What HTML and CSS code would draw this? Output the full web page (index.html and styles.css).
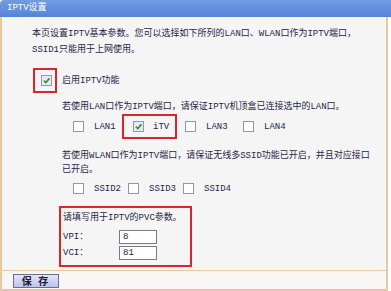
FILE: index.html
```html
<!DOCTYPE html>
<html lang="zh-CN">
<head>
    <meta charset="UTF-8">
    <title>IPTV设置</title>
    <link rel="stylesheet" href="styles.css">
</head>
<body>
<div class="title">IPTV设置</div>
<div class="main">
    <!--说明-->
    <p class="intro">本页设置IPTV基本参数。您可以选择如下所列的LAN口、WLAN口作为IPTV端口，<br>SSID1只能用于上网使用。</p>
    <!--启用-->
    <div class="enable">
        <span class="mark"><span class="cb on"><svg viewBox="0 0 9 9"><path d="M1.8 4.6 L3.9 6.6 L7.4 2.4"/></svg></span></span>
        <span>启用IPTV功能</span>
    </div>
    <div class="section">
        <p class="tip">若使用LAN口作为IPTV端口，请保证IPTV机顶盒已连接选中的LAN口。</p>
        <div class="ports lan">
            <div class="port"><span class="cb"></span><span>LAN1</span></div>
            <div class="port pick"><span class="cb on"><svg viewBox="0 0 9 9"><path d="M1.8 4.6 L3.9 6.6 L7.4 2.4"/></svg></span><span>iTV</span></div>
            <div class="port"><span class="cb"></span><span>LAN3</span></div>
            <div class="port"><span class="cb"></span><span>LAN4</span></div>
        </div>
        <p class="tip wlan">若使用WLAN口作为IPTV端口，请保证无线多SSID功能已开启，并且对应接口<br>已开启。</p>
        <div class="ports ssid">
            <div class="port"><span class="cb"></span><span>SSID2</span></div>
            <div class="port"><span class="cb"></span><span>SSID3</span></div>
            <div class="port"><span class="cb"></span><span>SSID4</span></div>
        </div>
        <!--PVC参数-->
        <div class="pvc">
            <p>请填写用于IPTV的PVC参数。</p>
            <div class="field first"><label>VPI：</label><input type="text" value="8"></div>
            <div class="field"><label>VCI：</label><input type="text" value="81"></div>
        </div>
    </div>
</div>
<div class="footer">
    <button type="button">保&nbsp;存</button>
</div>
</body>
</html>
```

FILE: styles.css
```css
* {
    margin: 0;
    padding: 0;
    box-sizing: border-box;
}

body {
    width: 391px;
    height: 291px;
    overflow: hidden;
    background: #fff;
    font: 9px/14px "Liberation Mono", "Noto Sans CJK SC", monospace;
    color: #1f2748;
}

.title {
    height: 17px;
    padding-left: 7px;
    line-height: 17px;
    color: #fff;
    background: linear-gradient(#729be6, #5583d8);
    border-top-left-radius: 4px;
}

.main {
    width: 388px;
    height: 254px;
    padding: 9px 0 0 30px;
    background: #f5f5f5;
    border: 2px solid #e6c9a2;
    border-top: 0;
    border-bottom-width: 1px;
}

.intro {
    line-height: 16px;
}

.enable {
    display: flex;
    align-items: center;
    gap: 5px;
    height: 25px;
    margin: 10px 0 0 1px;
}

.mark {
    display: flex;
    align-items: center;
    justify-content: center;
    width: 24px;
    height: 25px;
    padding-left: 3px;
    border: 2px solid #d8262b;
}

.cb {
    display: inline-block;
    flex: none;
    width: 11px;
    height: 11px;
    border: 1px solid #8e99ae;
    background: #fff;
}

.cb.on {
    background: #e9e9f0;
}

.cb svg {
    display: block;
    width: 9px;
    height: 9px;
}

.cb path {
    fill: none;
    stroke: #2c9a2c;
    stroke-width: 1.7;
}

.section {
    margin-left: 30px;
}

.tip {
    margin-top: 7px;
}

.tip.wlan {
    margin-top: 10px;
}

.ports {
    display: grid;
    align-items: center;
    padding-left: 11px;
}

.ports.lan {
    grid-template-columns: 49px 63px 58px auto;
    height: 25px;
}

.ports.ssid {
    grid-template-columns: 55px 55px auto;
    height: 15px;
    margin-top: 4px;
}

.port {
    display: flex;
    align-items: center;
    gap: 10px;
}

.port.pick {
    width: 55px;
    height: 25px;
    padding-left: 9px;
    gap: 9px;
    border: 2px solid #d8262b;
}

.pvc {
    width: 133px;
    height: 61px;
    margin: 10px 0 0 -3px;
    padding: 3px 0 0 2px;
    border: 2px solid #d8262b;
}

.field {
    display: flex;
    align-items: center;
    height: 16px;
}

.field.first {
    margin-top: 4px;
}

.field label {
    width: 56px;
}

.field input {
    width: 38px;
    height: 14px;
    padding-left: 3px;
    border: 1px solid #7b7b80;
    background: #fff;
    font: inherit;
    line-height: 12px;
    color: #1f2748;
}

.footer {
    width: 388px;
    height: 20px;
    padding: 3px 0 0 11px;
    background: #f7f6f5;
    border: 2px solid #e6c9a2;
    border-top: 0;
}

.footer button {
    display: block;
    width: 46px;
    height: 14px;
    border: 1px solid #6a6e8c;
    background: linear-gradient(#e2e5fa, #bcc3ee);
    font: bold 10px/12px "Noto Sans CJK SC", sans-serif;
    letter-spacing: 2px;
    color: #1a1d3a;
}
```
